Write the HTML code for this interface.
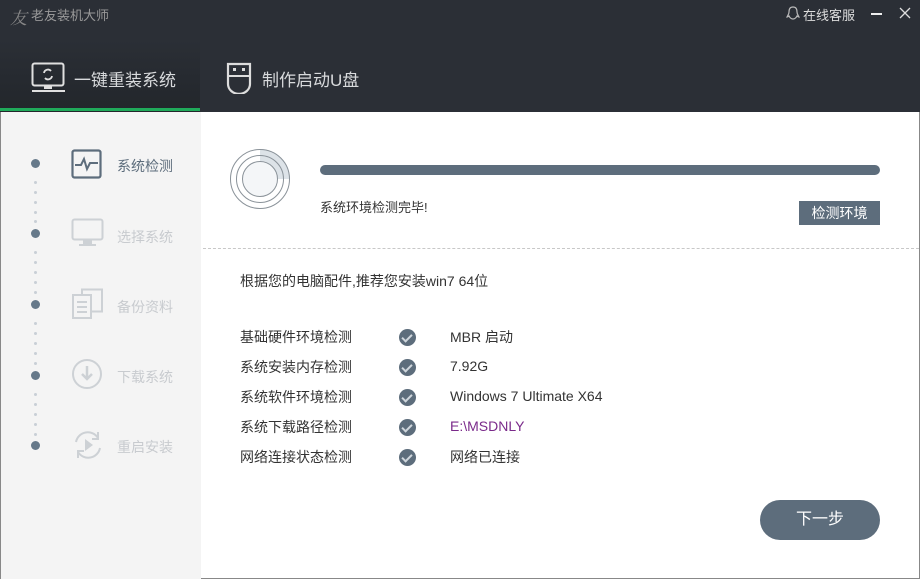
<!DOCTYPE html><html><head><meta charset="utf-8"><style>
*{margin:0;padding:0;box-sizing:border-box}
body{width:920px;height:579px;overflow:hidden;font-family:"Liberation Sans","Noto Sans CJK SC",sans-serif;background:#fff;position:relative}
.hdr{position:absolute;left:0;top:0;width:920px;height:112px;background:#2b2f36}
.tab1{position:absolute;left:0;top:40px;width:200px;height:72px;background:linear-gradient(#2b2f36,#22262b)}
.green{position:absolute;left:0;top:108px;width:200px;height:3px;background:#1faa5a}
.t{position:absolute;color:#d8dadc;white-space:nowrap}
.side{position:absolute;left:0;top:112px;width:201px;height:467px;background:#f4f4f4;border-left:1px solid #888}
.main{position:absolute;left:201px;top:112px;width:719px;height:467px;background:#fff;border-right:1px solid #888;border-bottom:1px solid #888}
.dot{position:absolute;left:30px;width:9px;height:9px;border-radius:50%;background:#66798a}
.sd{position:absolute;left:33px;width:3px;height:3px;border-radius:50%;background:#c8cfd6}
.lab{position:absolute;left:116px;font-size:14px;color:#c8cbcf}
.row{position:absolute;font-size:14px;color:#333}
.chk{position:absolute;left:399px;width:17px;height:17px;border-radius:50%;background:#5d6d7c}
.chk:after{content:"";position:absolute;left:5px;top:3px;width:4px;height:8px;border:solid #cfd6dc;border-width:0 2px 2px 0;transform:rotate(45deg)}
</style></head><body>
<div class="hdr"></div><div class="tab1"></div><div class="green"></div>
<div class="t" style="left:10px;top:4px;font-size:17px;color:#888;font-style:italic;font-family:'Liberation Serif','Noto Serif CJK SC',serif">友</div>
<div class="t" style="left:31px;top:5px;font-size:13px;color:#999">老友装机大师</div>
<svg style="position:absolute;left:786px;top:6px" width="14" height="16" viewBox="0 0 14 16"><path d="M7 1C4 1 3 3 3 6c0 2-1 3-2 5 1 0 2-1 2-1 1 2 2 3 4 3s3-1 4-3c0 0 1 1 2 1-1-2-2-3-2-5 0-3-1-5-4-5z" fill="none" stroke="#bbb" stroke-width="1.2"/></svg>
<div class="t" style="left:803px;top:5px;font-size:13px;color:#ddd">在线客服</div>
<div style="position:absolute;left:871px;top:13px;width:11px;height:1.5px;background:#eee"></div>
<svg style="position:absolute;left:899px;top:7px" width="12" height="12"><path d="M1 1L11 11M11 1L1 11" stroke="#ddd" stroke-width="1.3"/></svg>
<svg style="position:absolute;left:31px;top:62px" width="36" height="32" viewBox="0 0 36 32"><rect x="1.5" y="1.5" width="31" height="22" rx="2" fill="none" stroke="#e0e0e0" stroke-width="2"/><rect x="13" y="24" width="8" height="3" fill="#e0e0e0"/><rect x="1" y="28" width="33" height="2" fill="#e0e0e0"/><path d="M13 11a4 4 0 0 1 7-2M21 14a4 4 0 0 1-7 2" fill="none" stroke="#e0e0e0" stroke-width="1.8"/></svg>
<div class="t" style="left:74px;top:66px;font-size:17px">一键重装系统</div>
<svg style="position:absolute;left:226px;top:62px" width="26" height="32" viewBox="0 0 26 32"><path d="M2 2h22v20a10 9 0 0 1-22 0z" fill="none" stroke="#ddd" stroke-width="2.2"/><line x1="2" y1="14" x2="24" y2="14" stroke="#ddd" stroke-width="2"/><rect x="7" y="6" width="3" height="3" fill="#ddd"/><rect x="16" y="6" width="3" height="3" fill="#ddd"/></svg>
<div class="t" style="left:262px;top:66px;font-size:17px">制作启动U盘</div>

<div class="side">
<div class="dot" style="top:47px"></div><div class="dot" style="top:117px"></div><div class="dot" style="top:188px"></div><div class="dot" style="top:259px"></div><div class="dot" style="top:329px"></div>
<div class="sd" style="top:69px"></div><div class="sd" style="top:79px"></div><div class="sd" style="top:89px"></div><div class="sd" style="top:99px"></div><div class="sd" style="top:108px"></div>
<div class="sd" style="top:139px"></div><div class="sd" style="top:149px"></div><div class="sd" style="top:159px"></div><div class="sd" style="top:169px"></div><div class="sd" style="top:179px"></div>
<div class="sd" style="top:210px"></div><div class="sd" style="top:220px"></div><div class="sd" style="top:230px"></div><div class="sd" style="top:240px"></div><div class="sd" style="top:250px"></div>
<div class="sd" style="top:281px"></div><div class="sd" style="top:291px"></div><div class="sd" style="top:301px"></div><div class="sd" style="top:311px"></div><div class="sd" style="top:321px"></div>
<svg style="position:absolute;left:70px;top:37px" width="32" height="31"><rect x="1.5" y="1.5" width="28" height="27" rx="2" fill="none" stroke="#5d6d7c" stroke-width="2.2"/><path d="M4 16h6l3-6 3 10 3-6h8" fill="none" stroke="#5d6d7c" stroke-width="2"/></svg>
<div class="lab" style="top:44px;color:#5d6d7c">系统检测</div>
<svg style="position:absolute;left:70px;top:106px" width="33" height="30"><rect x="1.5" y="1.5" width="30" height="20" rx="2" fill="none" stroke="#cdd1d5" stroke-width="2"/><rect x="12" y="22" width="9" height="4" fill="#cdd1d5"/><rect x="8" y="26" width="17" height="2" fill="#cdd1d5"/></svg>
<div class="lab" style="top:115px">选择系统</div>
<svg style="position:absolute;left:70px;top:176px" width="33" height="32"><rect x="11" y="1.5" width="20" height="22" fill="none" stroke="#cdd1d5" stroke-width="2"/><rect x="2" y="7" width="18" height="23" fill="#f4f4f4" stroke="#cdd1d5" stroke-width="2"/><path d="M6 14h10M6 19h10M6 24h10" stroke="#cdd1d5" stroke-width="2"/></svg>
<div class="lab" style="top:185px">备份资料</div>
<svg style="position:absolute;left:70px;top:246px" width="32" height="32"><circle cx="16" cy="16" r="14" fill="none" stroke="#cdd1d5" stroke-width="2"/><path d="M16 8v12M11 16l5 5 5-5" fill="none" stroke="#cdd1d5" stroke-width="2.5"/></svg>
<div class="lab" style="top:255px">下载系统</div>
<svg style="position:absolute;left:70px;top:316px" width="34" height="34"><path d="M5 14a12 12 0 0 1 22-4M29 20a12 12 0 0 1-22 4" fill="none" stroke="#cdd1d5" stroke-width="2"/><path d="M27 4v7h-6M7 30v-7h6" fill="none" stroke="#cdd1d5" stroke-width="2"/><path d="M14 11l8 6-8 6z" fill="#cdd1d5"/></svg>
<div class="lab" style="top:325px">重启安装</div>
</div>

<div class="main">
<svg style="position:absolute;left:28px;top:36px" width="62" height="62"><path d="M31 1a30 30 0 0 1 30 30H31z" fill="#dde3e8"/><circle cx="31" cy="31" r="29.5" fill="none" stroke="#8a9299" stroke-width="1"/><circle cx="31" cy="31" r="23.5" fill="none" stroke="#8a9299" stroke-width="1"/><circle cx="31" cy="31" r="17.5" fill="#f4f6f8" stroke="#8a9299" stroke-width="1"/></svg>
<div style="position:absolute;left:119px;top:53px;width:560px;height:10px;border-radius:5px;background:#5d6d7c"></div>
<div class="row" style="left:119px;top:85px;font-size:13px">系统环境检测完毕!</div>
<div style="position:absolute;left:598px;top:89px;width:81px;height:24px;background:#5d6d7c;color:#fff;font-size:14px;text-align:center;line-height:24px">检测环境</div>
<div style="position:absolute;left:2px;top:136px;width:716px;border-top:1px dashed #c8c8c8"></div>
<div class="row" style="left:39px;top:159px">根据您的电脑配件,推荐您安装win7 64位</div>
<div class="row" style="left:39px;top:215px">基础硬件环境检测</div>
<div class="row" style="left:39px;top:245px">系统安装内存检测</div>
<div class="row" style="left:39px;top:275px">系统软件环境检测</div>
<div class="row" style="left:39px;top:305px">系统下载路径检测</div>
<div class="row" style="left:39px;top:335px">网络连接状态检测</div>
<div class="chk" style="left:198px;top:217px"></div><div class="chk" style="left:198px;top:247px"></div><div class="chk" style="left:198px;top:277px"></div><div class="chk" style="left:198px;top:307px"></div><div class="chk" style="left:198px;top:337px"></div>
<div class="row" style="left:249px;top:215px">MBR 启动</div>
<div class="row" style="left:249px;top:246px">7.92G</div>
<div class="row" style="left:249px;top:276px">Windows 7 Ultimate X64</div>
<div class="row" style="left:249px;top:306px;color:#7a2a8a">E:\MSDNLY</div>
<div class="row" style="left:249px;top:335px">网络已连接</div>
<div style="position:absolute;left:559px;top:388px;width:120px;height:40px;border-radius:20px;background:#5d6d7c;color:#fff;font-size:16px;text-align:center;line-height:40px">下一步</div>
</div>
</body></html>
